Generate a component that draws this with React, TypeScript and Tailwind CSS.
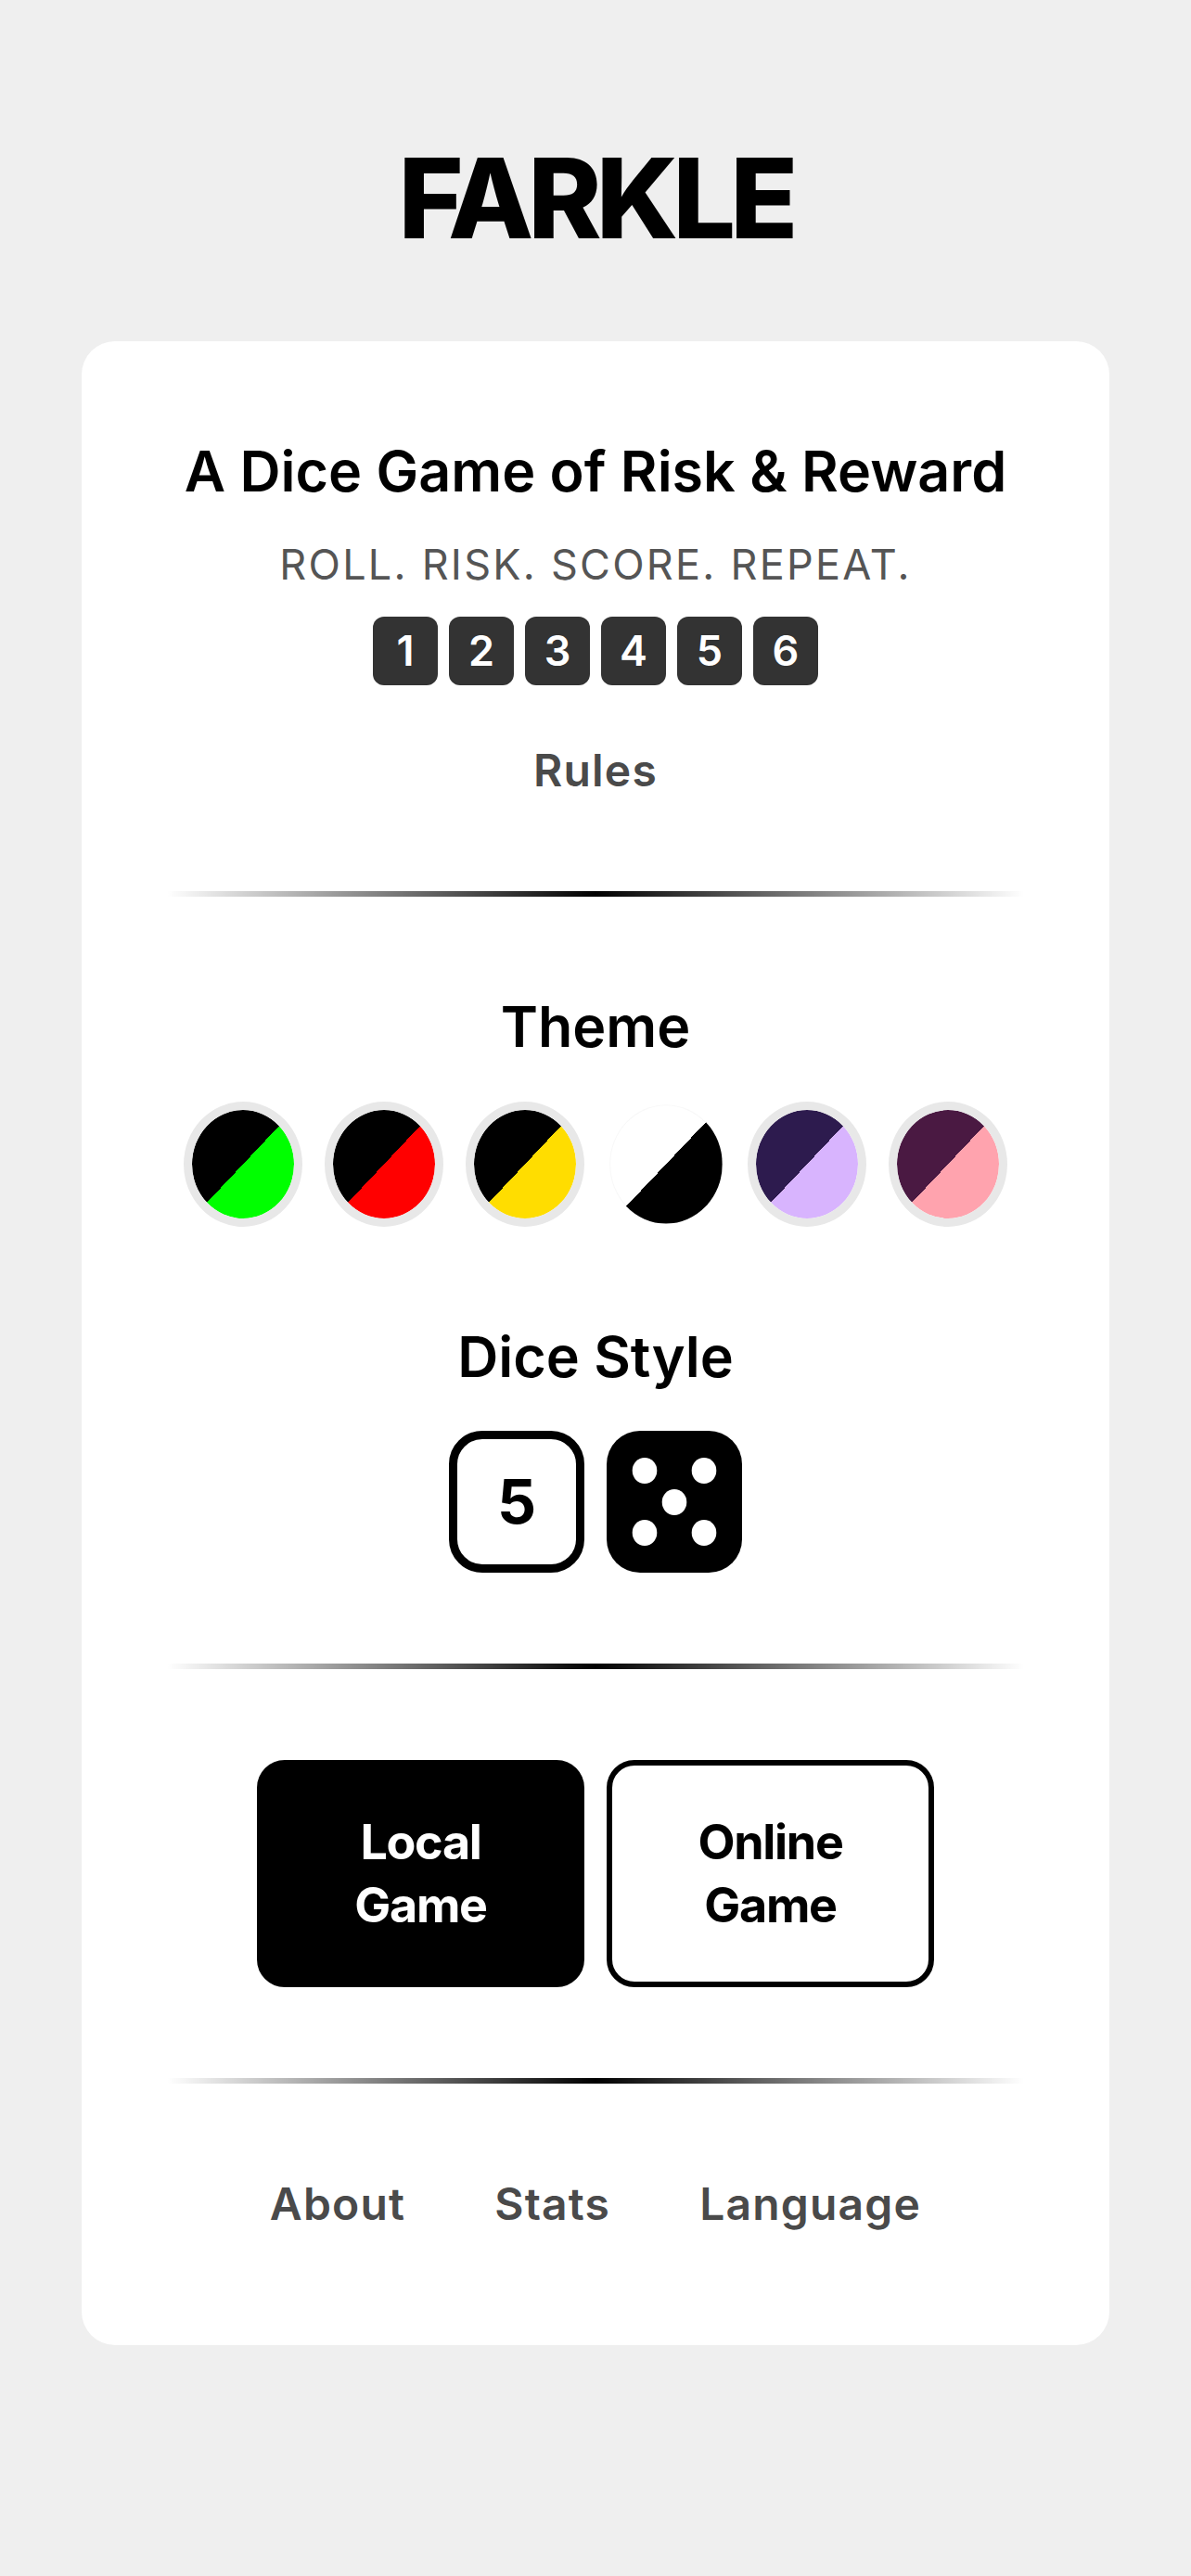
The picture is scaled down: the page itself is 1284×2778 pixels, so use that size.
import { useState } from "react";
import { clsx } from "clsx";

const themes = [
  {
    id: "green",
    label: "Black and green",
    fill: "bg-[linear-gradient(to_bottom_right,#000000_50%,#00ff00_50%)]",
  },
  {
    id: "red",
    label: "Black and red",
    fill: "bg-[linear-gradient(to_bottom_right,#000000_50%,#ff0000_50%)]",
  },
  {
    id: "yellow",
    label: "Black and yellow",
    fill: "bg-[linear-gradient(to_bottom_right,#000000_50%,#ffdd00_50%)]",
  },
  {
    id: "mono",
    label: "White and black",
    fill: "bg-[linear-gradient(to_bottom_right,#ffffff_50%,#000000_50%)]",
  },
  {
    id: "purple",
    label: "Indigo and lavender",
    fill: "bg-[linear-gradient(to_bottom_right,#2d1b4e_50%,#d8b4fe_50%)]",
  },
  {
    id: "pink",
    label: "Plum and pink",
    fill: "bg-[linear-gradient(to_bottom_right,#4a1942_50%,#ffa3ae_50%)]",
  },
];

const pips = [
  [41, 43],
  [105, 43],
  [73, 77],
  [41, 110],
  [105, 110],
];

const footerLinks = [
  { href: "#about", label: "About" },
  { href: "#stats", label: "Stats" },
  { href: "#language", label: "Language" },
];

const linkClass =
  "text-[48px] leading-[64px] font-semibold tracking-wide text-[#4a4a4a]";

function Divider() {
  return (
    <hr className="my-[98px] h-1.5 w-full border-0 bg-[linear-gradient(to_right,transparent,#000000,transparent)]" />
  );
}

function SectionTitle({ children }: { children: string }) {
  return (
    <h2 className="text-center text-[61px] leading-[84px] font-semibold">
      {children}
    </h2>
  );
}

export default function App() {
  const [theme, setTheme] = useState("mono");
  const [diceStyle, setDiceStyle] = useState("pips");

  return (
    <div className="min-h-screen bg-[#efefef] px-[88px] pt-36 pb-24 font-[Inter,sans-serif] text-black">
      <h1 className="text-center text-[120px] leading-[140px] font-extrabold tracking-tighter">
        FARKLE
      </h1>

      <main className="mt-[84px] flex flex-col items-center rounded-[36px] bg-white px-[92px] pt-[98px] pb-[120px]">
        <SectionTitle>A Dice Game of Risk &amp; Reward</SectionTitle>
        <p className="mt-[33px] text-[45px] leading-[52px] tracking-wider text-[#555555]">
          ROLL. RISK. SCORE. REPEAT.
        </p>
        <div className="mt-[30px] flex gap-3">
          {[1, 2, 3, 4, 5, 6].map((n) => (
            <span
              key={n}
              className="flex h-[74px] w-[70px] items-center justify-center rounded-xl bg-[#333333] text-[45px] font-semibold text-white"
            >
              {n}
            </span>
          ))}
        </div>
        <a href="#rules" className={clsx(linkClass, "mt-[60px]")}>
          Rules
        </a>

        <Divider />

        <SectionTitle>Theme</SectionTitle>
        <div className="mt-[39px] flex gap-6">
          {themes.map(({ id, label, fill }) => (
            <button
              key={id}
              type="button"
              aria-label={label}
              aria-pressed={theme === id}
              onClick={() => setTheme(id)}
              className={clsx(
                "h-[135px] w-[128px] rounded-[50%]",
                fill,
                theme === id
                  ? "scale-95 border border-black/3 bg-origin-border"
                  : "border-[9px] border-[#e8e8e8] bg-clip-padding",
              )}
            />
          ))}
        </div>

        <div className="mt-[98px]">
          <SectionTitle>Dice Style</SectionTitle>
        </div>
        <div className="mt-[38px] flex gap-6">
          <button
            type="button"
            aria-pressed={diceStyle === "number"}
            onClick={() => setDiceStyle("number")}
            className="flex h-[153px] w-[146px] items-center justify-center rounded-[36px] border-[9px] border-black bg-white text-[66px] font-bold"
          >
            5
          </button>
          <button
            type="button"
            aria-label="Pips"
            aria-pressed={diceStyle === "pips"}
            onClick={() => setDiceStyle("pips")}
            className="h-[153px] w-[146px] rounded-[36px] bg-black"
          >
            <svg viewBox="0 0 146 153" className="h-full w-full" fill="white">
              {pips.map(([cx, cy]) => (
                <ellipse key={`${cx}-${cy}`} cx={cx} cy={cy} rx="13.3" ry="14" />
              ))}
            </svg>
          </button>
        </div>

        <Divider />

        <div className="flex gap-6">
          <button
            type="button"
            className="h-[245px] w-[353px] rounded-[30px] border-[6px] border-black bg-black px-20 text-[52px] leading-[68px] font-bold tracking-tight text-white"
          >
            Local Game
          </button>
          <button
            type="button"
            className="h-[245px] w-[353px] rounded-[30px] border-[6px] border-black bg-white px-20 text-[52px] leading-[68px] font-bold tracking-tight"
          >
            Online Game
          </button>
        </div>

        <Divider />

        <nav className="flex gap-24">
          {footerLinks.map(({ href, label }) => (
            <a key={href} href={href} className={linkClass}>
              {label}
            </a>
          ))}
        </nav>
      </main>
    </div>
  );
}
